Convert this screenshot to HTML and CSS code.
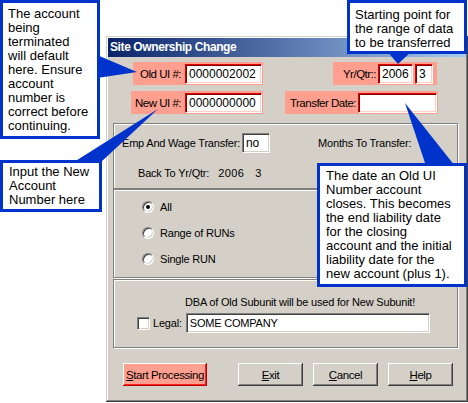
FILE: index.html
```html
<!DOCTYPE html>
<html lang="en">
<head>
  <meta charset="UTF-8" />
  <title>Site Ownership Change</title>
  <link rel="stylesheet" href="styles.css">
</head>
<body>
  <div class="dialog">
    <div class="titlebar">Site Ownership Change</div>
    <div class="dlg-body">
      <div class="row row-top">
        <div class="pink pink-old">
          <span class="pink-label">Old UI #:</span>
          <span class="field f-ui">0000002002</span>
        </div>
        <div class="pink pink-yr">
          <span class="pink-label">Yr/Qtr::</span>
          <span class="field f-yr">2006</span>
          <span class="field f-q">3</span>
        </div>
      </div>
      <div class="row row-new">
        <div class="pink pink-new">
          <span class="pink-label">New UI #:</span>
          <span class="field f-ui">0000000000</span>
        </div>
        <div class="pink pink-date">
          <span class="pink-label">Transfer Date:</span>
          <span class="field f-date"></span>
        </div>
      </div>

      <div class="group group-emp">
        <div class="emp-line">
          <span>Emp And Wage Transfer:</span>
          <span class="sunken f-no">no</span>
          <span class="months">Months To Transfer:</span>
        </div>
        <div class="back-line">
          <span>Back To Yr/Qtr:</span>
          <span class="back-yr">2006</span>
          <span class="back-q">3</span>
        </div>
      </div>

      <div class="group group-runs">
        <div class="radio-row"><span class="radio checked"></span>All</div>
        <div class="radio-row"><span class="radio"></span>Range of RUNs</div>
        <div class="radio-row"><span class="radio"></span>Single RUN</div>
      </div>

      <div class="group group-legal">
        <div class="dba">DBA of Old Subunit will be used for New Subunit!</div>
        <div class="legal-line">
          <span class="check"></span>
          <span class="legal-label">Legal:</span>
          <span class="sunken f-legal">SOME COMPANY</span>
        </div>
      </div>

      <div class="buttons">
        <button class="btn btn-start"><u>S</u>tart Processing</button>
        <button class="btn btn-exit"><u>E</u>xit</button>
        <button class="btn"><u>C</u>ancel</button>
        <button class="btn"><u>H</u>elp</button>
      </div>
    </div>
  </div>

  <!-- callout pointers -->
  <svg class="pointers" width="468" height="403" viewBox="0 0 468 403">
    <polygon points="97,55 97,78 137,72" />
    <polygon points="386,50 413,50 398,64" />
    <polygon points="74,162 101,162 158,109" />
    <polygon points="405,103 426,166 455,166" />
  </svg>

  <div class="note note-old">The account<br>being<br>terminated<br>will default<br>here. Ensure<br>account<br>number is<br>correct before<br>continuing.</div>
  <div class="note note-yr">Starting point for<br>the range of data<br>to be transferred</div>
  <div class="note note-new">Input the New<br>Account<br>Number here</div>
  <div class="note note-date">The date an Old UI<br>Number account<br>closes. This becomes<br>the end liability date<br>for the closing<br>account and the initial<br>liability date for the<br>new account (plus 1).</div>
</body>
</html>
```

FILE: styles.css
```css
body {
  margin: 0;
  width: 468px;
  height: 403px;
  overflow: hidden;
  position: relative;
  background: #ffffff;
  font-family: 'Liberation Sans', Arial, sans-serif;
  color: #000;
}

/* Dialog window */
.dialog {
  position: absolute;
  left: 106px;
  top: 36px;
  width: 362px;
  height: 366px;
  box-sizing: border-box;
  padding: 2px;
  background: #d4d0c8;
  box-shadow: inset -1px -1px #404040, inset 1px 1px #d4d0c8,
              inset -2px -2px #808080, inset 2px 2px #ffffff;
  font-size: 11px;
  letter-spacing: -0.2px;
}

.titlebar {
  height: 19px;
  line-height: 19px;
  padding-left: 2px;
  background: linear-gradient(to right, #0a246a, #a6caf0);
  color: #fff;
  font-weight: 700;
  font-size: 12px;
  letter-spacing: -0.4px;
}

.row {
  display: flex;
  height: 23px;
}

.row-top {
  margin-top: 5px;
  padding-left: 25px;
}

.row-new {
  margin-top: 6px;
  padding-left: 23px;
}

.pink {
  display: flex;
  align-items: center;
  justify-content: flex-end;
  box-sizing: border-box;
  height: 23px;
  background: #ff9f8f;
  padding-right: 1px;
  font-size: 11.5px;
  letter-spacing: -0.5px;
  white-space: nowrap;
}

.pink-label {
  margin-right: 4px;
}

.pink-old { width: 130px; }
.pink-yr { width: 104px; margin-left: 70px; padding-right: 4px; }
.pink-yr .pink-label { margin-right: 2px; }
.pink-new { width: 132px; }
.pink-date { width: 153px; margin-left: 22px; }
.pink-date .pink-label { margin-right: 2px; }

.field {
  display: block;
  flex-shrink: 0;
  box-sizing: border-box;
  height: 20px;
  line-height: 18px;
  padding-left: 3px;
  background: #fff;
  border: 1px solid;
  border-color: #e00000 #ffffff #ffffff #e00000;
  box-shadow: inset 1px 1px #800000, inset -1px -1px #ffd0c8;
  font-size: 12px;
  letter-spacing: 0;
}

.f-ui { width: 77px; }
.f-yr { width: 35px; }
.f-q { width: 18px; margin-left: 2px; }
.f-date { width: 79px; }

/* Group boxes */
.group {
  box-sizing: border-box;
  width: 345px;
  margin-left: 5px;
  border: 1px solid #808080;
  box-shadow: inset 1px 1px #ffffff, 1px 1px #ffffff;
}

.group-emp {
  margin-top: 9px;
  height: 66px;
  padding: 9px 0 0 8px;
}

.emp-line {
  display: flex;
  align-items: center;
  height: 20px;
}

.sunken {
  display: block;
  box-sizing: border-box;
  height: 20px;
  line-height: 18px;
  background: #fff;
  border: 1px solid;
  border-color: #808080 #ffffff #ffffff #808080;
  box-shadow: inset 1px 1px #404040, inset -1px -1px #d4d0c8;
  padding-left: 3px;
}

.f-no {
  width: 28px;
  margin-left: 2px;
  font-size: 12px;
}

.months {
  margin-left: 48px;
}

.back-line {
  display: flex;
  margin-top: 13px;
  padding-left: 16px;
  line-height: 14px;
}

.back-yr {
  margin-left: 9px;
  letter-spacing: 0.4px;
}

.back-q {
  margin-left: 11px;
}

.group-runs {
  height: 89px;
  padding-top: 4px;
}

.radio-row {
  display: flex;
  align-items: center;
  height: 26px;
  padding-left: 28px;
}

.radio {
  position: relative;
  box-sizing: border-box;
  width: 12px;
  height: 12px;
  margin-right: 6px;
  border-radius: 50%;
  background: #fff;
  border: 1px solid;
  border-color: #808080 #ffffff #ffffff #808080;
  box-shadow: inset 1px 1px #404040, inset -1px -1px #d4d0c8;
}

.radio.checked::after {
  content: '';
  position: absolute;
  left: 3px;
  top: 3px;
  width: 4px;
  height: 4px;
  border-radius: 50%;
  background: #000;
}

.group-legal {
  margin-top: 1px;
  height: 69px;
  padding-top: 15px;
}

.dba {
  line-height: 14px;
  padding-left: 71px;
}

.legal-line {
  display: flex;
  align-items: center;
  margin-top: 4px;
  padding-left: 23px;
}

.check {
  box-sizing: border-box;
  width: 13px;
  height: 13px;
  background: #fff;
  border: 1px solid;
  border-color: #808080 #ffffff #ffffff #808080;
  box-shadow: inset 1px 1px #404040, inset -1px -1px #d4d0c8;
}

.legal-label {
  margin-left: 3px;
  margin-right: 4px;
}

.f-legal {
  width: 244px;
}

/* Buttons */
.buttons {
  display: flex;
  margin-top: 15px;
  padding-left: 15px;
}

.btn {
  box-sizing: border-box;
  width: 65px;
  height: 23px;
  margin-left: 10px;
  padding: 0;
  border: none;
  background: #d4d0c8;
  box-shadow: inset -1px -1px #404040, inset 1px 1px #ffffff,
              inset -2px -2px #808080, inset 2px 2px #d4d0c8;
  font-family: 'Liberation Sans', Arial, sans-serif;
  font-size: 11.5px;
  letter-spacing: -0.4px;
  color: #000;
}

.btn-start {
  width: 84px;
  margin-left: 0;
  background: #ff9f8f;
  box-shadow: inset -1px -1px #c00000, inset 1px 1px #ffffff,
              inset -2px -2px #ff2020;
}

.btn-exit {
  margin-left: 31px;
}

/* Callouts */
.pointers {
  position: absolute;
  left: 0;
  top: 0;
  fill: #0033cc;
}

.note {
  position: absolute;
  box-sizing: border-box;
  background: #fff;
  border: 3px solid #0033cc;
  font-size: 13px;
  line-height: 14px;
  white-space: nowrap;
}

.note-old {
  left: 0;
  top: 0;
  width: 100px;
  height: 139px;
  padding: 4px 0 0 5px;
}

.note-yr {
  left: 347px;
  top: 0;
  width: 120px;
  height: 54px;
  padding: 5px 0 0 5px;
}

.note-new {
  left: 0;
  top: 160px;
  width: 102px;
  height: 52px;
  padding: 2px 0 0 6px;
}

.note-date {
  left: 317px;
  top: 163px;
  width: 150px;
  height: 124px;
  padding: 3px 0 0 6px;
}
```
